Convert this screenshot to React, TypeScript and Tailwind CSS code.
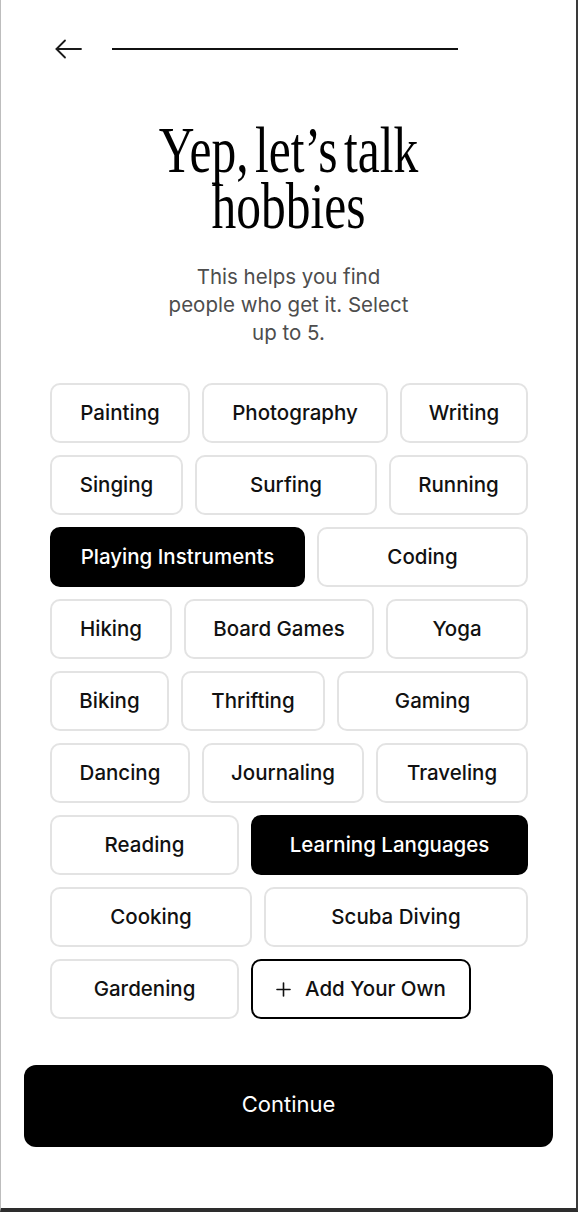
import { useState } from "react";

type Chip = { label: string; w: string };

const rows: Chip[][] = [
  [
    { label: "Painting", w: "w-[140px]" },
    { label: "Photography", w: "w-[186px]" },
    { label: "Writing", w: "flex-1" },
  ],
  [
    { label: "Singing", w: "w-[133px]" },
    { label: "Surfing", w: "w-[182px]" },
    { label: "Running", w: "flex-1" },
  ],
  [
    { label: "Playing Instruments", w: "w-[255px]" },
    { label: "Coding", w: "flex-1" },
  ],
  [
    { label: "Hiking", w: "w-[122px]" },
    { label: "Board Games", w: "w-[190px]" },
    { label: "Yoga", w: "flex-1" },
  ],
  [
    { label: "Biking", w: "w-[119px]" },
    { label: "Thrifting", w: "w-[144px]" },
    { label: "Gaming", w: "flex-1" },
  ],
  [
    { label: "Dancing", w: "w-[140px]" },
    { label: "Journaling", w: "w-[162px]" },
    { label: "Traveling", w: "flex-1" },
  ],
  [
    { label: "Reading", w: "w-[189px]" },
    { label: "Learning Languages", w: "flex-1" },
  ],
  [
    { label: "Cooking", w: "w-[202px]" },
    { label: "Scuba Diving", w: "flex-1" },
  ],
];

export default function App() {
  const [picked, setPicked] = useState<string[]>(["Playing Instruments", "Learning Languages"]);

  const toggle = (label: string) =>
    setPicked((p) =>
      p.includes(label) ? p.filter((x) => x !== label) : p.length < 5 ? [...p, label] : p
    );

  const chipCls = (label: string, w: string) =>
    `${w} h-[60px] rounded-[10px] flex items-center justify-center text-[20.5px] font-medium ${
      picked.includes(label)
        ? "bg-black text-white border-2 border-black"
        : "bg-white text-[#111] border-2 border-[#e3e3e3]"
    }`;

  return (
    <div
      className="w-[578px] h-[1212px] flex flex-col bg-white border-l border-l-[#bdbdbd] border-r-2 border-r-[#3a3a3a] border-b-4 border-b-[#2d2d2d]"
      style={{ fontFamily: "Inter, 'Noto Sans', sans-serif" }}
    >
      {/* top bar: back + progress */}
      <div className="mt-[37px] h-[24px] flex items-center ml-[54px]">
        <svg width="27" height="20" viewBox="0 0 27 20" fill="none" stroke="#1a1a1a" strokeWidth="1.8" strokeLinecap="round" strokeLinejoin="round">
          <path d="M1.5 10H26" />
          <path d="M10 1.5L1.5 10L10 18.5" />
        </svg>
        <div className="ml-[30px] w-[346px] h-[2px] bg-[#111]" />
      </div>

      {/* heading */}
      <h1
        className="mt-[61px] text-center text-[66px] leading-[56px] text-black scale-x-[0.75] [word-spacing:-8px]"
        style={{ fontFamily: "'Liberation Serif', 'DejaVu Serif', serif" }}
      >
        Yep, let’s talk
        <br />
        hobbies
      </h1>

      <p className="mt-[29px] text-center text-[20.5px] leading-[28px] text-[#4d4d4d]">
        This helps you find
        <br />
        people who get it. Select
        <br />
        up to 5.
      </p>

      {/* hobby chips */}
      <div className="mt-[36px] ml-[49px] w-[478px] flex flex-col gap-3">
        {rows.map((row, i) => (
          <div key={i} className="flex gap-3">
            {row.map((c) => (
              <button key={c.label} onClick={() => toggle(c.label)} className={chipCls(c.label, c.w)}>
                {c.label}
              </button>
            ))}
          </div>
        ))}
        <div className="flex gap-3">
          <button onClick={() => toggle("Gardening")} className={chipCls("Gardening", "w-[189px]")}>
            Gardening
          </button>
          <button className="w-[220px] h-[60px] rounded-[10px] border-2 border-black bg-white flex items-center justify-center gap-[14px] text-[20.5px] font-medium text-[#111]">
            <svg width="15" height="15" viewBox="0 0 15 15" fill="none" stroke="#111" strokeWidth="1.6" strokeLinecap="round">
              <path d="M7.5 1V14" />
              <path d="M1 7.5H14" />
            </svg>
            Add Your Own
          </button>
        </div>
      </div>

      <button className="mt-[46px] mx-[23px] h-[82px] rounded-[12px] bg-black text-white text-[22px] flex items-center justify-center pb-[3px]">
        Continue
      </button>
    </div>
  );
}
